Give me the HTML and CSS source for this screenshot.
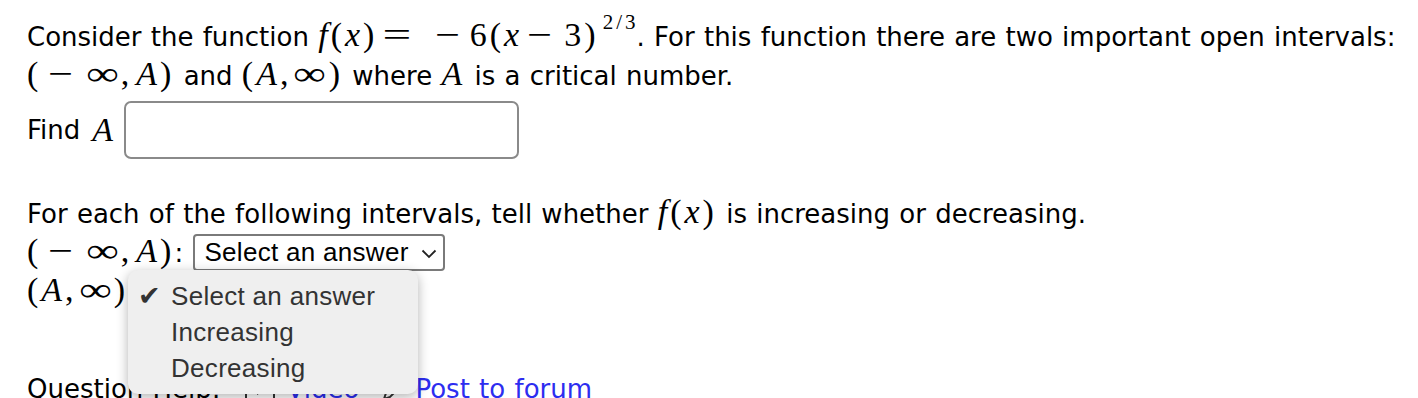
FILE: index.html
```html
<!DOCTYPE html>
<html>
<head>
<meta charset="utf-8">
<link rel="stylesheet" href="styles.css">
</head>
<body>
<div class="q">
  <div class="line">Consider the function <span class="m"><i>f</i>(<i>x</i>)<span class="rel">=</span><span class="bin u">−</span>6(<i>x</i><span class="bin">−</span>3)<sup>2<span class="sl">/</span>3</sup></span>. For this function there are two important open intervals:</div>
  <div class="line"><span class="m">(<span class="bin u">−</span><span class="inf">∞</span>,<i class="a">A</i>)</span> and <span class="m">(<i>A</i>,<span class="inf">∞</span>)</span> where <span class="m"><i>A</i></span> is a critical number.</div>
  <div class="line find">Find <span class="m"><i>A</i></span><input class="ans" type="text"></div>
  <div class="line blank1"></div>
  <div class="line">For each of the following intervals, tell whether <span class="m"><i>f</i>(<i>x</i>)</span> is increasing or decreasing.</div>
  <div class="line"><span class="m">(<span class="bin u">−</span><span class="inf">∞</span>,<i class="a">A</i>)</span>: <span class="select">Select an answer<svg class="chev" viewBox="0 0 16 10" width="16" height="10"><path d="M1.5 1.5 L8 8 L14.5 1.5" fill="none" stroke="#222" stroke-width="1.8"/></svg></span></div>
  <div class="line"><span class="m">(<i>A</i>,<span class="inf">∞</span>)</span>: <span class="select">Select an answer<svg class="chev" viewBox="0 0 16 10" width="16" height="10"><path d="M1.5 1.5 L8 8 L14.5 1.5" fill="none" stroke="#222" stroke-width="1.8"/></svg></span></div>
  <div class="line blank2"></div>
  <div class="line help"><span>Question Help:</span><svg class="hico" viewBox="0 0 30 24" width="30" height="24"><rect x="1" y="2" width="28" height="20" rx="2" fill="none" stroke="#333" stroke-width="2"/><path d="M12 7 L20 12 L12 17 Z" fill="#333"/></svg><a href="#" class="v">Video</a><svg class="hico2" viewBox="0 0 24 24" width="24" height="24"><path d="M3 21 L5 15 L17 3 L21 7 L9 19 Z" fill="none" stroke="#333" stroke-width="2"/></svg><a href="#" class="p">Post to forum</a></div>
</div>
<div class="menu">
  <div class="item"><span class="check">✔</span>Select an answer</div>
  <div class="item">Increasing</div>
  <div class="item">Decreasing</div>
</div>
</body>
</html>
```

FILE: styles.css
```css
html, body { margin: 0; padding: 0; background: #fff; }
body {
  font-family: "DejaVu Sans", sans-serif;
  font-size: 26px;
  word-spacing: 1px;
  color: #000;
  overflow: hidden;
  height: 398px;
  position: relative;
}
.q { padding: 18px 0 0 27px; }
.line { height: 39px; line-height: 39px; white-space: nowrap; }
.m {
  font-family: "Liberation Serif", serif;
  font-size: 34px;
  line-height: 0;
  letter-spacing: 3px;
  word-spacing: 0;
}
.m i { font-style: italic; }
.rel { display: inline-block; transform: scaleX(1.5); margin: 0 17px 0 11px; }
.bin { display: inline-block; transform: scaleX(1.3); margin: 0 12px 0 8px; }
.bin.u { margin: 0 10px 0 10px; }
.inf { display: inline-block; transform: scaleX(1.35); margin: 0 3px 0 7px; }
.a { margin-left: 4px; }
.m sup { font-size: 21px; vertical-align: 17px; line-height: 0; margin-left: 4px; letter-spacing: 1px; }
.sl { margin: 0 2px; }
.find { height: 58px; margin-top: 5px; display: flex; align-items: center; }
.find .m { margin-left: 12px; margin-right: 8px; }
.ans {
  width: 395px; height: 58px; box-sizing: border-box;
  border: 2px solid #8a8a8a; border-radius: 7px; margin: 0; padding: 0;
  background: #fff;
}
.blank1 { height: 36px; }
.blank2 { height: 58px; }
.select {
  display: inline-flex; align-items: center; gap: 12px;
  font-family: "Liberation Sans", Arial, sans-serif; font-size: 26px;
  letter-spacing: 0.3px; word-spacing: 0;
  border: 2px solid #7a7a7a; border-radius: 4px;
  height: 37px; box-sizing: border-box; padding: 0 6px 0 9px;
  vertical-align: middle; position: relative; top: -2px; margin-left: 1px;
}
.chev { margin-top: 2px; }
.help { display: flex; align-items: center; }
.help a { color: #2d2df0; text-decoration: none; }
.hico { margin-left: 24px; }
.v { margin-left: 12px; }
.hico2 { margin-left: 22px; }
.p { margin-left: 10px; }
.menu {
  position: absolute; left: 128px; top: 270px; width: 290px; height: 124px;
  background: #efefef; border-radius: 10px;
  box-shadow: 0 3px 12px rgba(0,0,0,0.3);
  box-sizing: border-box; padding-top: 8px;
  font-family: "Liberation Sans", Arial, sans-serif; font-size: 26px; color: #333;
  letter-spacing: 0.3px; word-spacing: 0;
}
.item { height: 36px; line-height: 36px; padding-left: 43px; position: relative; }
.check { position: absolute; left: 10px; font-size: 27px; color: #333; font-family: "DejaVu Sans", sans-serif; }
```
